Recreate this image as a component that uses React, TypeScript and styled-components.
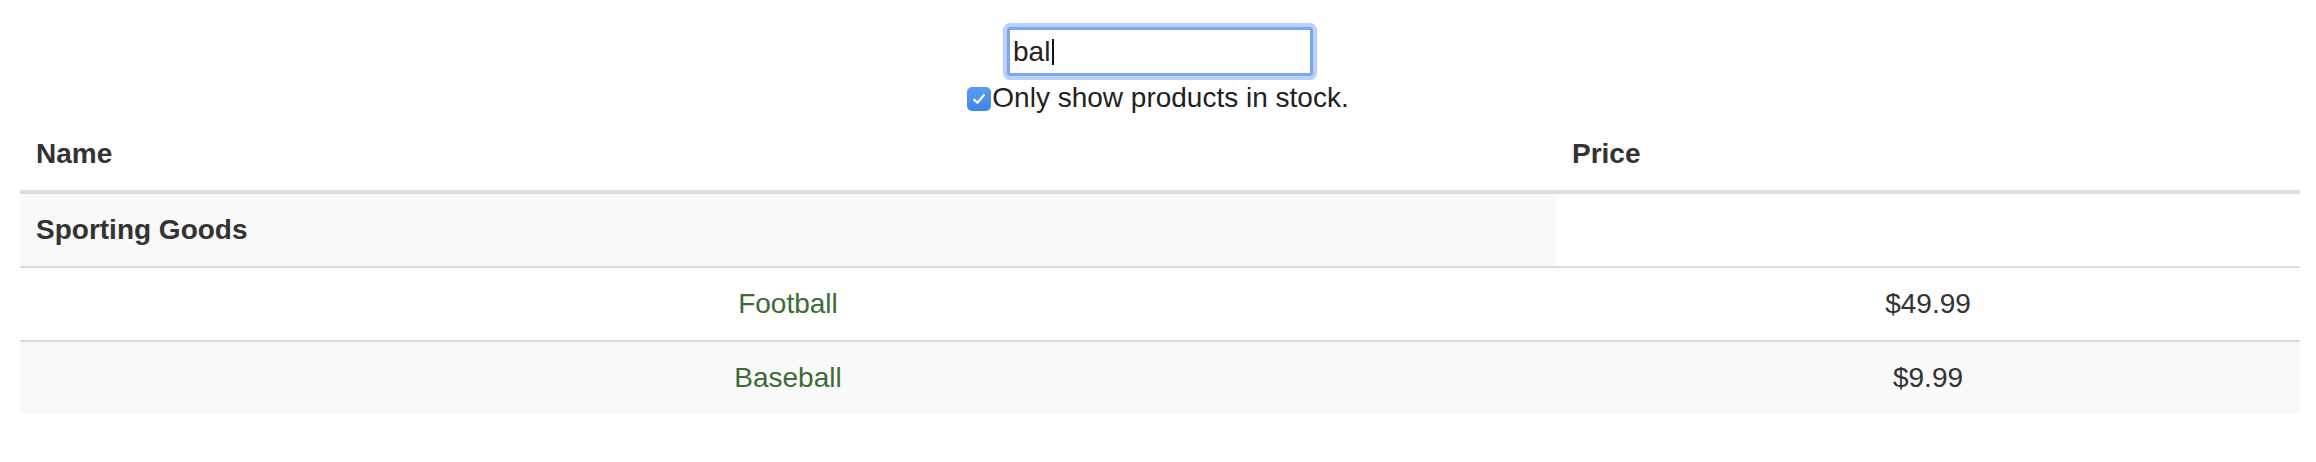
import React from "react";
import styled, { createGlobalStyle } from "styled-components";

const GlobalStyle = createGlobalStyle`
  html, body {
    margin: 0;
    padding: 0;
    background: #ffffff;
  }
  body {
    font-family: "Liberation Sans", Arial, Helvetica, sans-serif;
    font-size: 28px;
    line-height: 40px;
    color: #333333;
  }
`;

const Page = styled.div`
  padding-top: 27px;
`;

const SearchForm = styled.form`
  display: flex;
  flex-direction: column;
  align-items: center;
  margin: 0;
`;

const SearchBox = styled.div`
  box-sizing: border-box;
  width: 306px;
  height: 49px;
  margin-left: 4px;
  margin-bottom: 2px;
  padding: 0 3px;
  display: flex;
  align-items: center;
  background: #ffffff;
  border: 3px solid #7ba7ef;
  border-radius: 3px;
  box-shadow: 0 0 0 4px rgba(128, 172, 246, 0.55);
  font-size: 28px;
  line-height: 40px;
  color: #222222;
`;

const Caret = styled.span`
  display: inline-block;
  width: 2px;
  height: 26px;
  margin-left: 2px;
  background: #111111;
`;

const StockLabel = styled.label`
  display: flex;
  align-items: center;
  height: 40px;
  font-size: 28px;
  line-height: 40px;
  color: #222222;
`;

const CheckBox = styled.span`
  box-sizing: border-box;
  width: 24px;
  height: 24px;
  margin-top: 2px;
  margin-right: 1px;
  border-radius: 5px;
  background: linear-gradient(#5a9cf3, #3f86ea);
  display: flex;
  align-items: center;
  justify-content: center;
`;

const Table = styled.table`
  width: calc(100% - 36px);
  margin: 0 16px 0 20px;
  border-collapse: collapse;
  border-spacing: 0;
`;

const HeadCell = styled.th<{ $width?: number }>`
  box-sizing: border-box;
  width: ${(p) => (p.$width ? `${p.$width}px` : "auto")};
  padding: 16px;
  text-align: left;
  font-weight: bold;
  line-height: 40px;
  vertical-align: bottom;
  border-bottom: 4px solid #dddddd;
`;

const Row = styled.tr<{ $striped?: boolean }>`
  background: ${(p) => (p.$striped ? "#f9f9f9" : "transparent")};
`;

const CategoryCell = styled.th`
  padding: 16px;
  text-align: left;
  font-weight: bold;
  line-height: 40px;
  border-top: 2px solid #dddddd;
`;

const Cell = styled.td`
  padding: 16px;
  text-align: center;
  line-height: 40px;
  border-top: 2px solid #dddddd;
`;

const ProductName = styled.span<{ $inStock: boolean }>`
  color: ${(p) => (p.$inStock ? "#3d6b37" : "#a94442")};
`;

const products = [
  { name: "Football", price: "$49.99", stocked: true },
  { name: "Baseball", price: "$9.99", stocked: true },
];

export default function App() {
  return (
    <Page>
      <GlobalStyle />
      <SearchForm onSubmit={(e) => e.preventDefault()}>
        <SearchBox>
          <span>bal</span>
          <Caret />
        </SearchBox>
        <StockLabel>
          <CheckBox>
            <svg width="16" height="16" viewBox="0 0 16 16" aria-hidden="true">
              <path
                d="M3.2 8.6 L6.4 11.8 L12.8 4.2"
                fill="none"
                stroke="#ffffff"
                strokeWidth="2.2"
                strokeLinecap="round"
                strokeLinejoin="round"
              />
            </svg>
          </CheckBox>
          Only show products in stock.
        </StockLabel>
      </SearchForm>
      <Table>
        <thead>
          <tr>
            <HeadCell $width={1536}>Name</HeadCell>
            <HeadCell>Price</HeadCell>
          </tr>
        </thead>
        <tbody>
          <Row $striped>
            <CategoryCell>Sporting Goods</CategoryCell>
          </Row>
          {products.map((p, i) => (
            <Row key={p.name} $striped={i % 2 === 1}>
              <Cell>
                <ProductName $inStock={p.stocked}>{p.name}</ProductName>
              </Cell>
              <Cell>{p.price}</Cell>
            </Row>
          ))}
        </tbody>
      </Table>
    </Page>
  );
}
